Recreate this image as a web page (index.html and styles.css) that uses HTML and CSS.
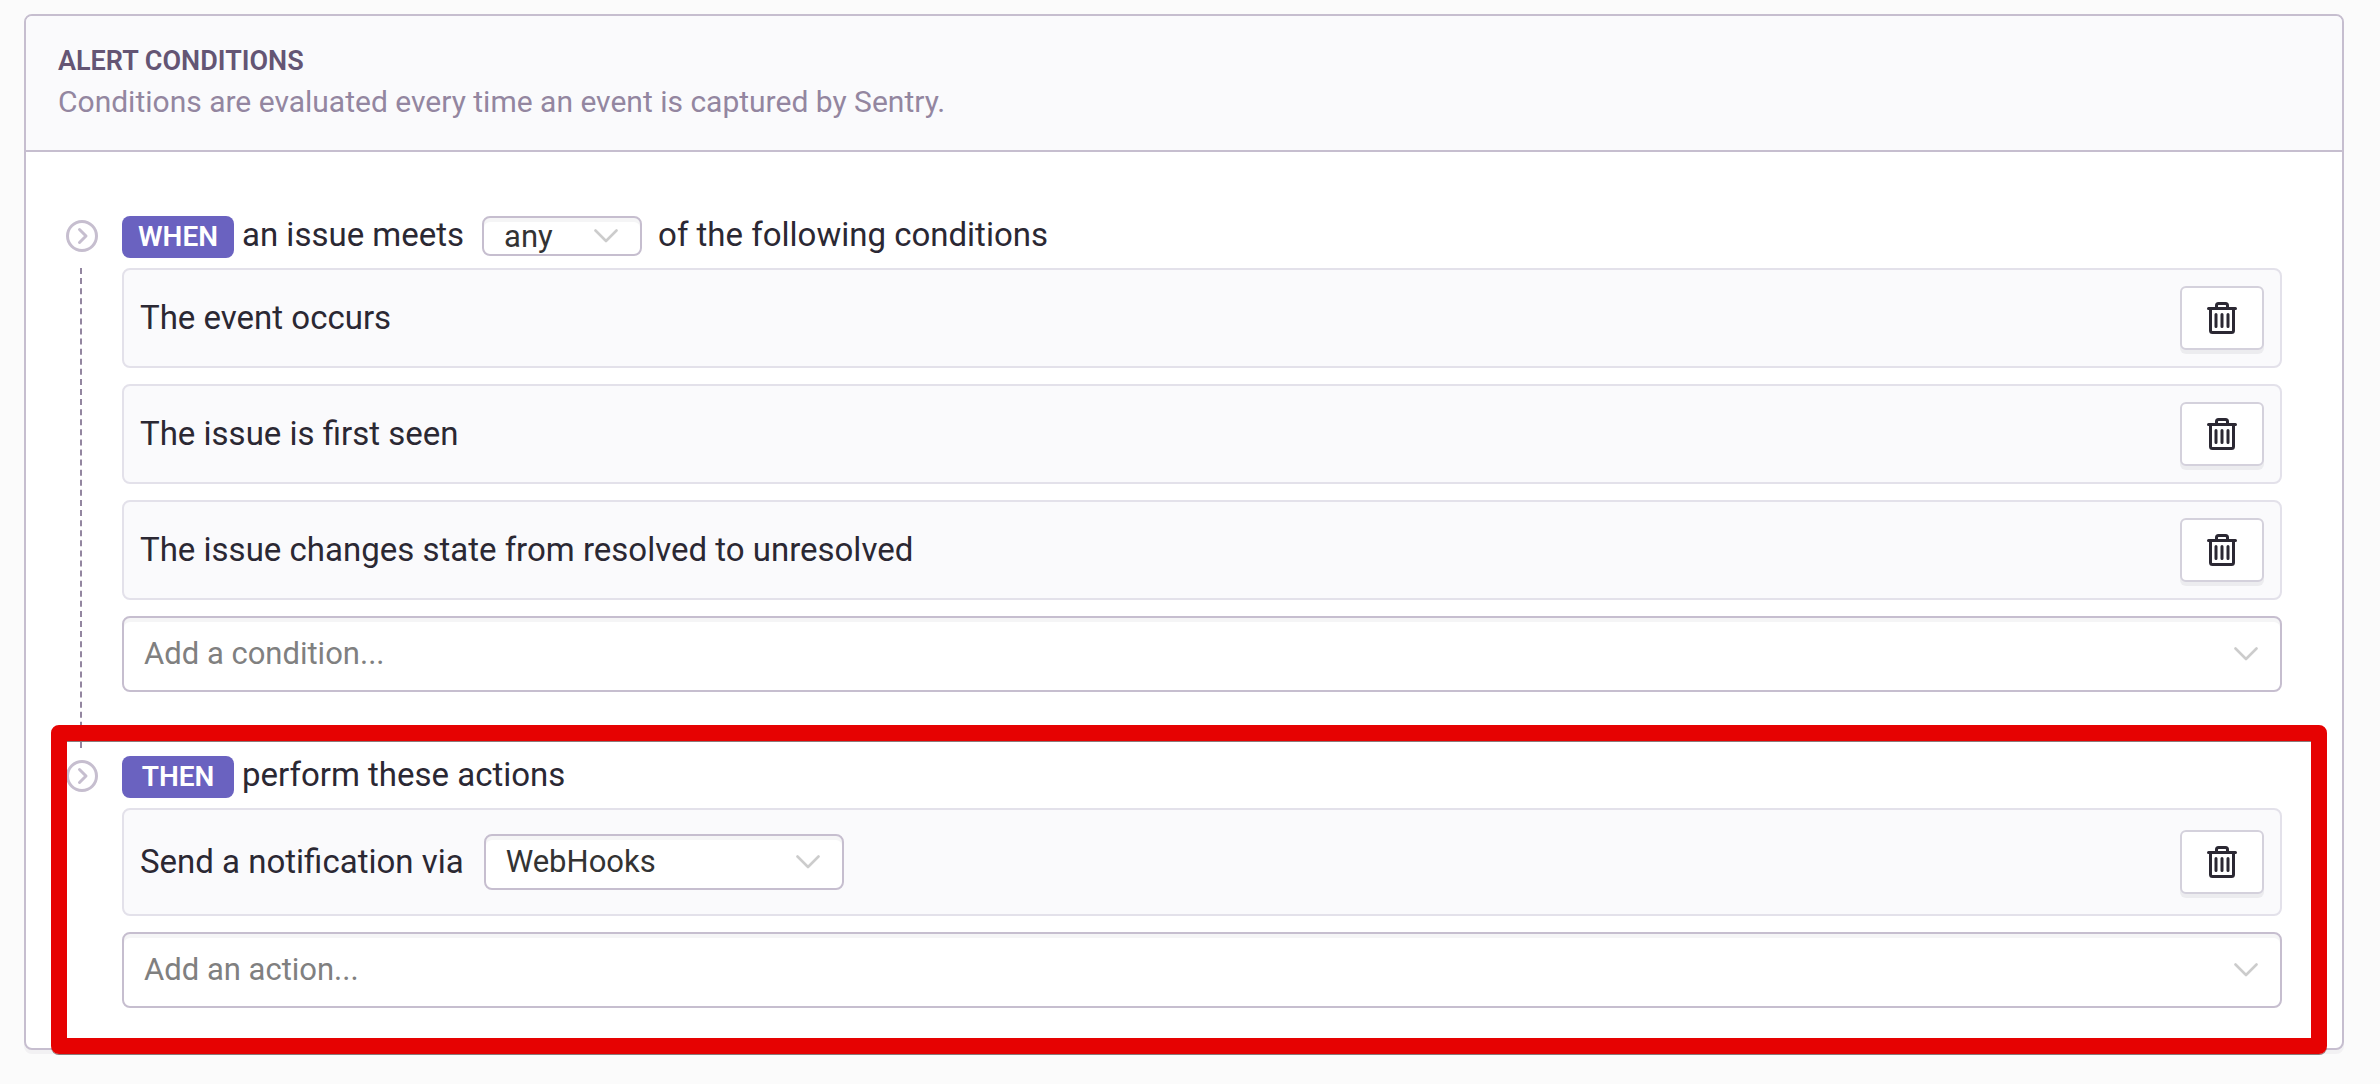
FILE: index.html
```html
<!DOCTYPE html>
<html lang="en">
<head>
<meta charset="utf-8">
<title>Alert conditions</title>
<link rel="stylesheet" href="styles.css">
</head>
<body>
<svg class="sprite" aria-hidden="true">
  <symbol id="chevron" viewBox="0 0 24 14"><path d="M1.500 1.500 12 12 22.500 1.500" fill="none" stroke="currentColor" stroke-width="2.600" stroke-linecap="round" stroke-linejoin="round"/></symbol>
  <symbol id="step" viewBox="0 0 32 32"><g fill="none" stroke="currentColor" stroke-width="3" stroke-linecap="round" stroke-linejoin="round"><circle cx="16" cy="16" r="14.500"/><path d="M13.500 9.500 20 16l-6.500 6.500"/></g></symbol>
  <symbol id="trash" viewBox="0 0 30 32"><g fill="none" stroke="currentColor" stroke-width="3" stroke-linecap="round" stroke-linejoin="round"><path d="M1.500 6.500h27M3.500 6.500v22a2 2 0 0 0 2 2h19a2 2 0 0 0 2-2v-22M9.500 6V3.500a2 2 0 0 1 2-2h7a2 2 0 0 1 2 2V6"/><path d="M9 12.500v12M15 12.500v12M21 12.500v12"/></g></symbol>
</svg>
<form class="card">
  <header class="card-header">
    <h2 class="title">ALERT CONDITIONS</h2>
    <p class="subtitle">Conditions are evaluated every time an event is captured by Sentry.</p>
  </header>
  <div class="card-body">
    <section class="step step-linked">
      <div class="rail"><svg class="step-icon"><use href="#step"/></svg><span class="rail-line"></span></div>
      <div class="step-main">
        <div class="step-head">
          <span class="badge">WHEN</span>
          <label for="match">an issue meets</label>
          <span class="select select-match"><select id="match"><option>any</option><option>all</option></select><svg class="chevron"><use href="#chevron"/></svg></span>
          <span>of the following conditions</span>
        </div>
        <div class="rules">
          <div class="rule"><span>The event occurs</span><button class="delete" type="button" aria-label="Delete condition"><svg><use href="#trash"/></svg></button></div>
          <div class="rule"><span>The issue is first seen</span><button class="delete" type="button" aria-label="Delete condition"><svg><use href="#trash"/></svg></button></div>
          <div class="rule"><span>The issue changes state from resolved to unresolved</span><button class="delete" type="button" aria-label="Delete condition"><svg><use href="#trash"/></svg></button></div>
          <span class="select select-add"><select aria-label="Add a condition"><option>Add a condition...</option></select><svg class="chevron"><use href="#chevron"/></svg></span>
        </div>
      </div>
    </section>
    <section class="step">
      <div class="rail"><svg class="step-icon"><use href="#step"/></svg></div>
      <div class="step-main">
        <div class="step-head">
          <span class="badge">THEN</span>
          <span>perform these actions</span>
        </div>
        <div class="rules">
          <div class="rule">
            <div class="rule-field"><label for="service">Send a notification via</label>
            <span class="select select-service"><select id="service"><option>WebHooks</option></select><svg class="chevron"><use href="#chevron"/></svg></span></div>
            <button class="delete" type="button" aria-label="Delete action"><svg><use href="#trash"/></svg></button>
          </div>
          <span class="select select-add"><select aria-label="Add an action"><option>Add an action...</option></select><svg class="chevron"><use href="#chevron"/></svg></span>
        </div>
      </div>
      <div class="highlight"></div>
    </section>
  </div>
</form>
</body>
</html>
```
FILE: styles.css
```css
* { box-sizing: border-box; }

body {
  margin: 0;
  padding: 14px 36px 30px 24px;
  background: #fbfbfb;
  color: #2b2833;
  font-family: Roboto, "Liberation Sans", sans-serif;
  font-size: 33px;
  line-height: 38px;
}

.sprite { position: absolute; width: 0; height: 0; }

.card {
  background: #fff;
  border: 2px solid #c6becf;
  border-radius: 8px;
  box-shadow: 0 4px 0 #f2f1f3;
}

.card-header {
  padding: 28px 32px;
  background: #fafafc;
  border-bottom: 2px solid #c6becf;
  border-radius: 6px 6px 0 0;
}

.title {
  margin: 0 0 4px;
  color: #645574;
  font-size: 27px;
  font-weight: 600;
  line-height: 34px;
}

.subtitle {
  margin: 0;
  color: #9386a0;
  font-size: 30px;
  line-height: 40px;
}

.card-body { padding: 64px 60px 40px 40px; }

.step {
  position: relative;
  display: grid;
  grid-template-columns: 32px minmax(0, 1fr);
  column-gap: 24px;
}

.step-linked .step-main { padding-bottom: 64px; }

.rail {
  display: flex;
  flex-direction: column;
  padding: 4px 0 8px;
}

.step-icon { flex: none; width: 32px; height: 32px; color: #c6becf; }

.rail-line {
  flex: 1;
  margin: 16px 0 0 14px;
  border-left: 2px dashed #9386a0;
}

.step-head {
  display: flex;
  align-items: flex-start;
  gap: 8px;
  margin-bottom: 10px;
}

.badge {
  width: 112px;
  background: #6a62c0;
  border-radius: 8px;
  color: #fff;
  font-size: 28px;
  font-weight: 600;
  line-height: 42px;
  text-align: center;
}

.rules { display: grid; gap: 16px; }

.rule {
  display: flex;
  align-items: center;
  justify-content: space-between;
  padding: 16px;
  background: #fafafc;
  border: 2px solid #e3e1ea;
  border-radius: 8px;
}

.rule-field { display: flex; align-items: center; gap: 20px; }

.delete {
  display: grid;
  place-items: center;
  width: 84px;
  height: 64px;
  padding: 0;
  background: #fff;
  border: 2px solid #d4d1dc;
  border-radius: 6px;
  box-shadow: 0 4px 0 #ececef;
  color: #2b2833;
}

.delete svg { width: 30px; height: 32px; }

.select { display: grid; grid-template-rows: 100%; align-items: center; }

.select > * { grid-area: 1 / 1; }

.select select {
  appearance: none;
  width: 100%;
  height: 100%;
  padding: 0 20px;
  background: #fff;
  border: 2px solid #c6becf;
  border-radius: 8px;
  box-shadow: inset 0 4px 0 #f5f5f6;
  color: #333;
  font: inherit;
  font-size: 31px;
}

.chevron {
  justify-self: end;
  width: 24px;
  height: 14px;
  margin-right: 24px;
  color: #ccc;
  pointer-events: none;
}

.select-match { width: 160px; height: 40px; margin: 0 8px 0 10px; }

.select-service { width: 360px; height: 56px; margin: 8px 0; }

.select-add { height: 76px; }

.select-add select { color: #808080; }

.highlight {
  position: absolute;
  inset: -31px -45px -46px -15px;
  border: 16px solid #e60202;
  border-radius: 8px;
  box-shadow: 0 1px 0 #8a7a7a, inset 0 1px 0 #8a7a7a;
  pointer-events: none;
}
```
